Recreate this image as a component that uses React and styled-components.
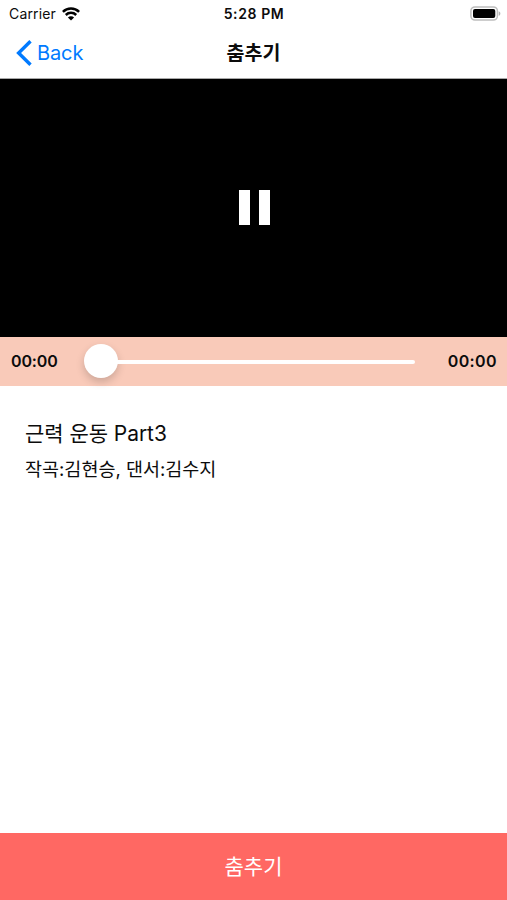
import React from 'react';
import styled, { createGlobalStyle } from 'styled-components';

const GlobalStyle = createGlobalStyle`
  * {
    box-sizing: border-box;
  }

  body {
    margin: 0;
    background: white;
    font-family: Inter, "Noto Sans CJK KR", sans-serif;
  }
`;

const Screen = styled.div`
  display: flex;
  flex-direction: column;
  width: 100%;
  height: 100vh;
  background: white;
  color: #0c0c0c;
  overflow: hidden;
`;

const StatusBar = styled.div`
  display: grid;
  grid-template-columns: 1fr auto 1fr;
  align-items: center;
  height: 27px;
  padding: 0 6px 0 9px;
  font-size: 14px;
  line-height: 27px;
  flex-shrink: 0;

  svg {
    display: block;
  }
`;

const Carrier = styled.div`
  display: flex;
  align-items: center;
  gap: 6px;
  letter-spacing: 0.15px;
`;

const Clock = styled.div`
  padding-right: 2px;
  font-weight: 600;
  letter-spacing: 0.6px;
`;

const Battery = styled.div`
  justify-self: end;
`;

const NavBar = styled.div`
  display: grid;
  grid-template-columns: 1fr auto 1fr;
  align-items: center;
  height: 52px;
  padding: 0 16px;
  border-bottom: 1px solid #a8a8a8;
  flex-shrink: 0;

  h1 {
    margin: 0;
    font-size: 19.5px;
    font-weight: 700;
    line-height: 50px;
  }
`;

const BackButton = styled.button`
  display: flex;
  align-items: center;
  gap: 5px;
  padding: 0;
  border: none;
  background: none;
  color: #007aff;
  font-family: inherit;
  font-size: 20px;
  letter-spacing: -0.1px;
`;

const Video = styled.div`
  display: flex;
  align-items: center;
  justify-content: center;
  gap: 9px;
  height: 258px;
  padding: 0 0 1px 1px;
  background: black;
  flex-shrink: 0;
`;

const PauseBar = styled.div`
  width: 11px;
  height: 35px;
  background: white;
`;

const Controls = styled.div`
  display: flex;
  align-items: center;
  height: 49px;
  padding: 0 10px 0 11px;
  background: #f9cab9;
  flex-shrink: 0;
`;

const Time = styled.span`
  font-size: 16px;
  font-weight: 600;
  line-height: 20px;
  padding-bottom: 1px;
  letter-spacing: ${props => props.$spacing || '-0.15px'};
`;

const Slider = styled.div`
  display: flex;
  align-items: center;
  width: 331px;
  margin: 0 auto 0 26px;
`;

const Thumb = styled.div`
  width: 34px;
  height: 34px;
  margin-bottom: 1px;
  border-radius: 50%;
  background: white;
  box-shadow: 0 4px 9px rgba(0, 0, 0, 0.18);
`;

const Track = styled.div`
  flex: 1;
  height: 4px;
  margin: 1px 0 0 -2px;
  border-radius: 0 2px 2px 0;
  background: white;
`;

const Info = styled.div`
  flex: 1;
  padding: 32px 25px;

  h2 {
    margin: 0;
    font-size: 21px;
    font-weight: 400;
    line-height: 32px;
    letter-spacing: -0.05px;
  }

  p {
    margin: 5px 0 0;
    font-size: 18.5px;
    line-height: 28px;
  }
`;

const DanceButton = styled.button`
  height: 67px;
  padding: 0 0 3px;
  border: none;
  background: #ff6863;
  color: white;
  font-family: inherit;
  font-size: 21px;
  font-weight: 400;
  flex-shrink: 0;
`;

function App() {
  return (
    <Screen>
      <GlobalStyle />
      <StatusBar>
        <Carrier>
          Carrier
          <svg width="18" height="14" viewBox="0 0 18 14" fill="none" stroke="black" strokeWidth="2.5">
            <path d="M0.9 4.9a11.5 11.5 0 0 1 16.2 0" />
            <path d="M3.8 8a7.4 7.4 0 0 1 10.4 0" />
            <path d="M9 13.6L5.9 10.5a4.4 4.4 0 0 1 6.2 0z" fill="black" stroke="none" />
          </svg>
        </Carrier>
        <Clock>5:28 PM</Clock>
        <Battery>
          <svg width="31" height="15" viewBox="0 0 31 15">
            <rect x="0.9" y="0.9" width="26.5" height="13.2" rx="4" fill="white" stroke="#bdbdbd" strokeWidth="1.5" />
            <rect x="3" y="3" width="22.3" height="9" rx="2" fill="black" />
            <path d="M28.7 5.2c2.2 0.9 2.2 3.7 0 4.6z" fill="#b0b0b0" />
          </svg>
        </Battery>
      </StatusBar>
      <NavBar>
        <BackButton>
          <svg width="16" height="26" viewBox="0 0 16 26" fill="none" stroke="#007aff" strokeWidth="3.4">
            <path d="M14.5 1.2L2.6 13l11.9 11.8" />
          </svg>
          Back
        </BackButton>
        <h1>춤추기</h1>
      </NavBar>
      <Video>
        <PauseBar />
        <PauseBar />
      </Video>
      <Controls>
        <Time>00:00</Time>
        <Slider>
          <Thumb />
          <Track />
        </Slider>
        <Time $spacing="0.4px">00:00</Time>
      </Controls>
      <Info>
        <h2>근력 운동 Part3</h2>
        <p>작곡:김현승, 댄서:김수지</p>
      </Info>
      <DanceButton>춤추기</DanceButton>
    </Screen>
  );
}

export default App;
